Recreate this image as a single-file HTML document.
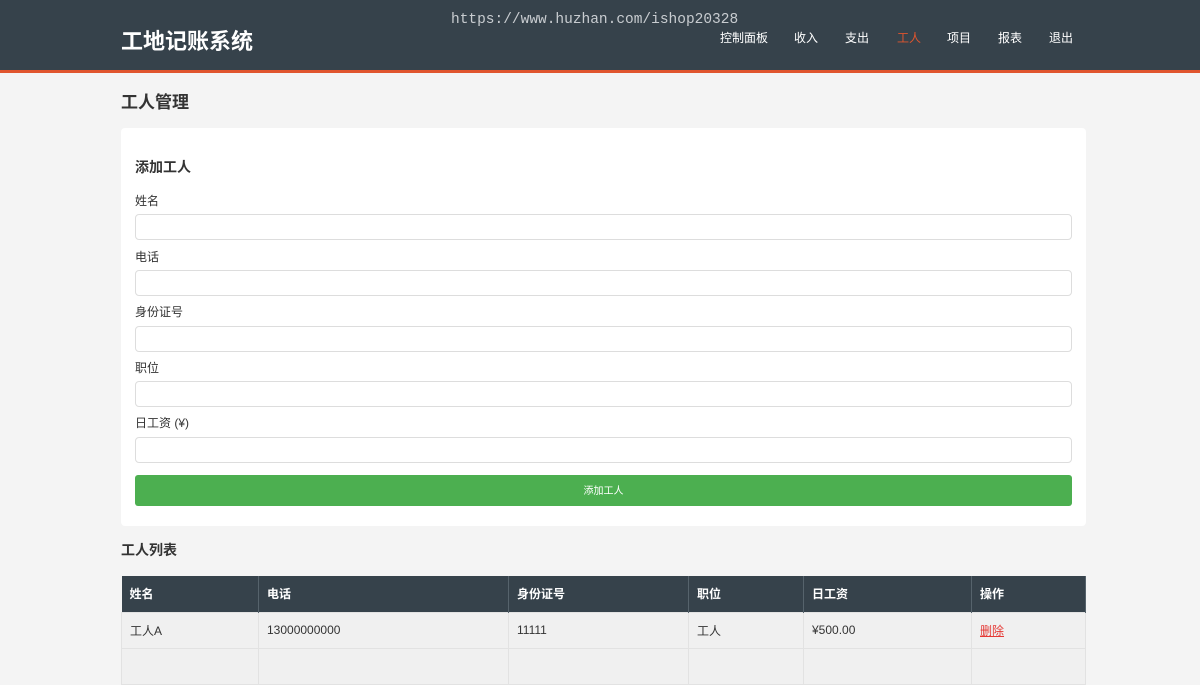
<!DOCTYPE html>
<html><head><meta charset="utf-8"><style>
*{margin:0;padding:0;box-sizing:border-box}
body{width:1200px;height:662px;overflow:hidden;background:#f4f4f4;font-family:"Liberation Sans","Noto Sans CJK SC",sans-serif;color:#333;position:relative}
.hdr{position:absolute;left:0;top:0;width:1200px;height:73px;background:#36424b;border-bottom:3px solid #e0552e}
.logo{position:absolute;left:121px;top:24px;color:#fff;font-size:22px;font-weight:bold}
.wm{position:absolute;left:451px;top:12px;color:#c8ccd0;font-family:"Liberation Mono",monospace;font-size:14.5px}
.nav a{position:absolute;top:29px;color:#fff;font-size:12px;text-decoration:none}
h2{position:absolute;left:121px;top:88px;font-size:17px;font-weight:bold}
.card{position:absolute;left:121px;top:128px;width:965px;height:398px;background:#fff;border-radius:4px}
.card h3{position:absolute;left:14px;top:29px;font-size:14px}
.lbl{position:absolute;left:14px;font-size:12px;color:#333}
.inp{position:absolute;left:14px;width:937px;height:26px;border:1px solid #ddd;border-radius:4px}
.btn{position:absolute;left:14px;top:347px;width:937px;height:31px;background:#4caf50;border-radius:3px;color:#fff;font-size:10px;text-align:center;line-height:33px}
h4{position:absolute;left:121px;top:540px;font-size:14px}
table{position:absolute;left:121px;top:576px;width:965px;border-collapse:collapse;font-size:12px}
th{background:#36424b;color:#fff;text-align:left;height:36px;padding-left:8px;border-right:1px solid #56636c;font-weight:bold}
td{background:#f0f0f0;height:36px;padding-left:8px;border:1px solid #e2e2e2}
</style></head><body>
<div class="hdr"><div class="logo">工地记账系统</div><div class="wm">https://www.huzhan.com/ishop20328</div>
<div class="nav"><a style="left:720px">控制面板</a><a style="left:794px">收入</a><a style="left:845px">支出</a><a style="left:897px;color:#e0552e">工人</a><a style="left:947px">项目</a><a style="left:998px">报表</a><a style="left:1049px">退出</a></div></div>
<h2>工人管理</h2>
<div class="card"><h3>添加工人</h3>
<div class="lbl" style="top:64px">姓名</div><div class="inp" style="top:86px"></div>
<div class="lbl" style="top:120px">电话</div><div class="inp" style="top:142px"></div>
<div class="lbl" style="top:175px">身份证号</div><div class="inp" style="top:198px"></div>
<div class="lbl" style="top:231px">职位</div><div class="inp" style="top:253px"></div>
<div class="lbl" style="top:286px">日工资 (¥)</div><div class="inp" style="top:309px"></div>
<div class="btn">添加工人</div></div>
<h4>工人列表</h4>
<table><tr><th style="width:137px">姓名</th><th style="width:250px">电话</th><th style="width:180px">身份证号</th><th style="width:115px">职位</th><th style="width:168px">日工资</th><th>操作</th></tr>
<tr><td>工人A</td><td>13000000000</td><td>11111</td><td>工人</td><td>¥500.00</td><td style="color:#e53935;text-decoration:underline">删除</td></tr>
<tr><td>&nbsp;</td><td></td><td></td><td></td><td></td><td></td></tr></table>
</body></html>
